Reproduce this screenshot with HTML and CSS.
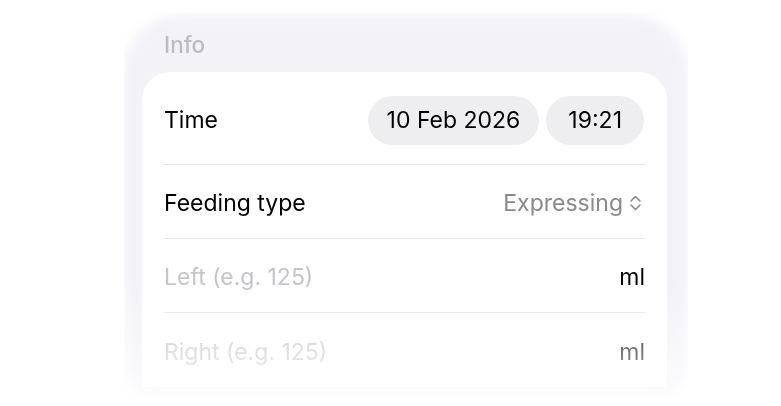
FILE: index.html
```html
<!DOCTYPE html>
<html>
<head>
<meta charset="utf-8">
<link rel="stylesheet" href="styles.css">
</head>
<body>
<div class="panel">
  <div class="header">Info</div>
  <div class="card">
    <div class="row row-first">
      <span class="label">Time</span>
      <div class="pills">
        <span class="pill">10 Feb 2026</span>
        <span class="pill pill-time">19:21</span>
      </div>
    </div>
    <div class="row">
      <span class="label">Feeding type</span>
      <span class="picker">Expressing
        <svg class="chev" width="13" height="18" viewBox="0 0 13 18"><path d="M2 7 L6.5 2.5 L11 7 M2 11 L6.5 15.5 L11 11" fill="none" stroke="#8a8a8e" stroke-width="1.6" stroke-linecap="round" stroke-linejoin="round"/></svg>
      </span>
    </div>
    <div class="row">
      <span class="placeholder">Left (e.g. 125)</span>
      <span class="unit">ml</span>
    </div>
    <div class="row row-last">
      <span class="placeholder">Right (e.g. 125)</span>
      <span class="unit">ml</span>
    </div>
  </div>
</div>
</body>
</html>
```
FILE: styles.css
```css
html, body {
  margin: 0;
  padding: 0;
  background: #ffffff;
}
body {
  font-family: Inter, "Liberation Sans", sans-serif;
  color: #000;
}
.panel {
  position: relative;
  z-index: 0;
  margin: 12px 0 0 124px;
  width: 564px;
  height: 385px;
  box-sizing: border-box;
  padding: 0 21px 0 18px;
  -webkit-mask-image: linear-gradient(to bottom, #000 0, #000 270px, rgba(0,0,0,0.5) 345px, rgba(0,0,0,0.3) 100%);
  mask-image: linear-gradient(to bottom, #000 0, #000 270px, rgba(0,0,0,0.5) 345px, rgba(0,0,0,0.3) 100%);
}
.panel::before {
  content: "";
  position: absolute;
  inset: 4px 0 0 0;
  z-index: -1;
  background: #f2f2f7;
  border-radius: 56px 56px 30px 30px;
  filter: blur(6px);
}
.header {
  height: 60px;
  box-sizing: border-box;
  padding: 20px 0 0 22px;
  font-size: 22.5px;
  font-weight: 500;
  color: #bcbcc1;
  line-height: 26px;
}
.card {
  background: #ffffff;
  border-radius: 28px 28px 0 0;
  padding: 4px 22px 0 22px;
  height: 315px;
  box-sizing: border-box;
}
.row {
  display: flex;
  align-items: center;
  justify-content: space-between;
  box-sizing: border-box;
  min-height: 74px;
  padding-top: 3px;
  border-bottom: 1px solid #e6e6ea;
  font-size: 23px;
}
.row-first {
  min-height: 89px;
  padding-top: 0;
}
.row-last {
  border-bottom: none;
}
.pills {
  display: flex;
  gap: 7px;
  margin-right: 1px;
}
.pill {
  background: #eeeef0;
  border-radius: 25px;
  height: 49px;
  line-height: 49px;
  padding: 0 19px;
}
.pill-time {
  padding: 0 22px;
}
.picker {
  display: flex;
  align-items: center;
  gap: 6px;
  color: #8a8a8e;
  margin-right: 3px;
}
.chev {
  display: block;
}
.placeholder {
  color: #c5c5c9;
}
.unit {
  color: #000;
}
```
